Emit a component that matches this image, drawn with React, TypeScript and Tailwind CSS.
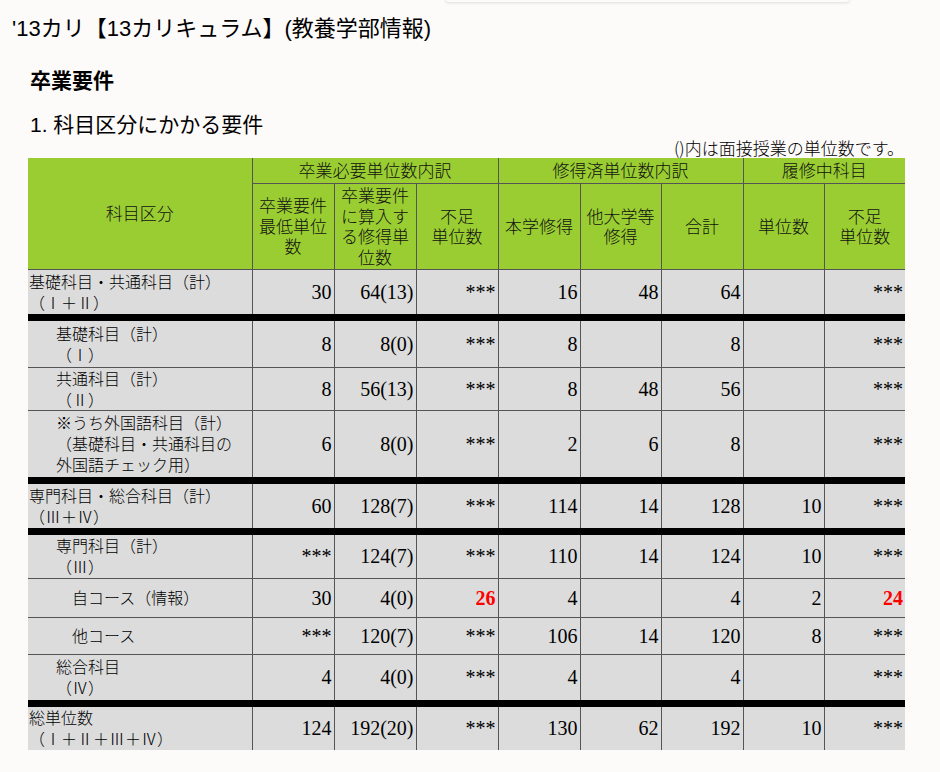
import React from 'react';

type Cell = string | { v: string; red: true };

type Row = {
  label: string[];
  indent: number;
  h: string;
  thick?: boolean;
  cells: Cell[];
};

const rows: Row[] = [
  {
    label: ['基礎科目・共通科目（計）', '（Ⅰ＋Ⅱ）'],
    indent: 0,
    h: 'h-[48px]',
    cells: ['30', '64(13)', '***', '16', '48', '64', '', '***'],
  },
  {
    label: ['基礎科目（計）', '（Ⅰ）'],
    indent: 1,
    h: 'h-[50px]',
    thick: true,
    cells: ['8', '8(0)', '***', '8', '', '8', '', '***'],
  },
  {
    label: ['共通科目（計）', '（Ⅱ）'],
    indent: 1,
    h: 'h-[42px]',
    cells: ['8', '56(13)', '***', '8', '48', '56', '', '***'],
  },
  {
    label: ['※うち外国語科目（計）', '（基礎科目・共通科目の', '外国語チェック用）'],
    indent: 1,
    h: 'h-[70px]',
    cells: ['6', '8(0)', '***', '2', '6', '8', '', '***'],
  },
  {
    label: ['専門科目・総合科目（計）', '（Ⅲ＋Ⅳ）'],
    indent: 0,
    h: 'h-[51px]',
    thick: true,
    cells: ['60', '128(7)', '***', '114', '14', '128', '10', '***'],
  },
  {
    label: ['専門科目（計）', '（Ⅲ）'],
    indent: 1,
    h: 'h-[47px]',
    thick: true,
    cells: ['***', '124(7)', '***', '110', '14', '124', '10', '***'],
  },
  {
    label: ['自コース（情報）'],
    indent: 2,
    h: 'h-[39px]',
    cells: ['30', '4(0)', { v: '26', red: true }, '4', '', '4', '2', { v: '24', red: true }],
  },
  {
    label: ['他コース'],
    indent: 2,
    h: 'h-[37px]',
    cells: ['***', '120(7)', '***', '106', '14', '120', '8', '***'],
  },
  {
    label: ['総合科目', '（Ⅳ）'],
    indent: 1,
    h: 'h-[49px]',
    cells: ['4', '4(0)', '***', '4', '', '4', '', '***'],
  },
  {
    label: ['総単位数', '（Ⅰ＋Ⅱ＋Ⅲ＋Ⅳ）'],
    indent: 0,
    h: 'h-[47px]',
    thick: true,
    cells: ['124', '192(20)', '***', '130', '62', '192', '10', '***'],
  },
];

const jp = "font-['Noto_Sans_CJK_JP',sans-serif]";
const indentCls = ['pl-[1px]', 'pl-[28px]', 'pl-[44px]'];

function HeadCell({ children, colSpan, rowSpan }: { children: React.ReactNode; colSpan?: number; rowSpan?: number }) {
  return (
    <th
      colSpan={colSpan}
      rowSpan={rowSpan}
      className="border border-[#555] bg-[#9acd32] px-[1px] text-center align-middle text-[17px] leading-[20.5px] font-light text-[#111]"
    >
      {children}
    </th>
  );
}

export default function App() {
  return (
    <div className="relative min-h-[772px] w-[940px] overflow-hidden bg-[#fdfafa] text-black">
      {/* faint edge of a popup above the page */}
      <div className="absolute left-[445px] top-[-12px] h-[14px] w-[405px] rounded-b bg-[#fdfafa] shadow-[0_1px_3px_rgba(0,0,0,0.12)]" />

      <h1 className="pl-[12px] pt-[17px] font-['Liberation_Sans','Noto_Sans_CJK_JP',sans-serif] text-[22px] leading-[24px] font-normal">
        '13カリ【13カリキュラム】(教養学部情報)
      </h1>

      <h2 className={`mt-[26px] pl-[30px] text-[21px] leading-[24px] font-bold ${jp}`}>卒業要件</h2>

      <h3 className="mt-[22px] pl-[30px] font-['Liberation_Sans','Noto_Sans_CJK_JP',sans-serif] text-[21px] leading-[24px] font-normal">
        1. 科目区分にかかる要件
      </h3>

      <div className={`mt-[1px] w-[904px] text-right text-[17px] leading-[20px] font-light ${jp}`}>()内は面接授業の単位数です。</div>

      <table className="ml-[28px] w-[877px] table-fixed border-collapse border-hidden">
        <colgroup>
          <col className="w-[224px]" />
          <col className="w-[82px]" />
          <col className="w-[82px]" />
          <col className="w-[82px]" />
          <col className="w-[82px]" />
          <col className="w-[81px]" />
          <col className="w-[82px]" />
          <col className="w-[81px]" />
          <col className="w-[81px]" />
        </colgroup>
        <thead className={jp}>
          <tr className="h-[25px]">
            <HeadCell rowSpan={2}>科目区分</HeadCell>
            <HeadCell colSpan={3}>卒業必要単位数内訳</HeadCell>
            <HeadCell colSpan={3}>修得済単位数内訳</HeadCell>
            <HeadCell colSpan={2}>履修中科目</HeadCell>
          </tr>
          <tr className="h-[86px]">
            <HeadCell>
              卒業要件
              <br />
              最低単位
              <br />数
            </HeadCell>
            <HeadCell>
              卒業要件
              <br />
              に算入す
              <br />
              る修得単
              <br />
              位数
            </HeadCell>
            <HeadCell>
              不足
              <br />
              単位数
            </HeadCell>
            <HeadCell>本学修得</HeadCell>
            <HeadCell>
              他大学等
              <br />
              修得
            </HeadCell>
            <HeadCell>合計</HeadCell>
            <HeadCell>単位数</HeadCell>
            <HeadCell>
              不足
              <br />
              単位数
            </HeadCell>
          </tr>
        </thead>
        <tbody>
          {rows.map((r, i) => (
            <tr key={i} className={`${r.h} bg-[#dcdcdc] ${r.thick ? 'border-t-[7px] border-t-black' : ''}`}>
              <td
                className={`border border-[#555] ${r.thick ? 'border-t-[7px] border-t-black' : ''} ${indentCls[r.indent]} pr-[2px] text-left align-middle text-[16px] leading-[21px] font-light ${jp}`}
              >
                {r.label.map((l, j) => (
                  <div key={j} className="whitespace-nowrap">
                    {l}
                  </div>
                ))}
              </td>
              {r.cells.map((c, j) => (
                <td
                  key={j}
                  className={`border border-[#555] ${r.thick ? 'border-t-[7px] border-t-black' : ''} px-[2px] text-right align-middle font-['Liberation_Serif',serif] text-[20px] leading-[22px]`}
                >
                  {typeof c === 'string' ? c : <span className="font-bold text-[#f00]">{c.v}</span>}
                </td>
              ))}
            </tr>
          ))}
        </tbody>
      </table>
    </div>
  );
}
